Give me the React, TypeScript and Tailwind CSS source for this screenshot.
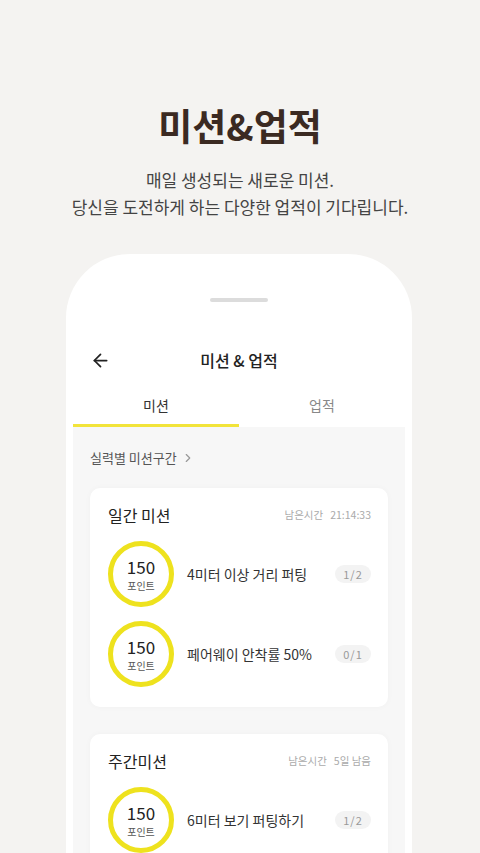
import { ArrowLeft, ChevronRight } from "lucide-react";

const font = { fontFamily: '"Noto Sans CJK KR", "Noto Sans", sans-serif' };

type Mission = { title: string; progress: string };

function MissionRow({ m }: { m: Mission }) {
  return (
    <div className="flex items-center">
      <div className="w-[66px] h-[66px] rounded-full border-[5px] border-[#eee21e] flex flex-col items-center justify-center shrink-0">
        <span className="text-[17px] leading-[20px] text-[#222]">150</span>
        <span className="mt-[2px] text-[10px] leading-[13px] text-[#555]">포인트</span>
      </div>
      <span className="ml-[13px] flex-1 text-[14px] text-[#333]">{m.title}</span>
      <span className="w-[36px] h-[18px] rounded-full bg-[#f3f3f3] text-[11px] leading-[18px] text-center text-[#999] tracking-[1px]">
        {m.progress}
      </span>
    </div>
  );
}

function MissionCard({ title, remain, missions }: { title: string; remain: string; missions: Mission[] }) {
  return (
    <div className="bg-white rounded-[10px] shadow-[0_0_6px_rgba(0,0,0,0.03)] pt-[15px] pb-[20px] pl-[18px] pr-[17px]">
      <div className="flex items-center justify-between h-[24px]">
        <span className="text-[16px] text-[#222]">{title}</span>
        <span className="text-[10.5px] text-[#aaa] flex gap-[7px]">
          <span>남은시간</span>
          <span>{remain}</span>
        </span>
      </div>
      <div className="mt-[14px] flex flex-col gap-[14px]">
        {missions.map((m) => (
          <MissionRow key={m.title} m={m} />
        ))}
      </div>
    </div>
  );
}

export default function App() {
  return (
    <div className="w-[480px] h-[853px] overflow-hidden bg-[#f4f3f1]" style={font}>
      {/* 상단 소개 */}
      <div className="pt-[101px] text-center">
        <h1 className="text-[37px] leading-[48px] font-bold text-[#3b2a22]">미션&업적</h1>
        <p className="mt-[17px] text-[17px] leading-[27px] text-[#444]">
          매일 생성되는 새로운 미션.
          <br />
          당신을 도전하게 하는 다양한 업적이 기다립니다.
        </p>
      </div>

      {/* 폰 화면 */}
      <div className="mt-[34px] ml-[66px] w-[346px] h-[700px] bg-white rounded-t-[64px] px-[7px]">
        <div className="pt-[44px]">
          <div className="mx-auto w-[58px] h-[4px] rounded bg-[#dcdcdc]" />
        </div>

        <div className="mt-[38px] h-10 flex items-center relative px-[17px]">
          <ArrowLeft size={21} strokeWidth={2} className="text-[#222]" />
          <span className="absolute left-0 right-0 text-center text-[16px] font-medium text-[#222]">미션 & 업적</span>
        </div>

        <div className="mt-[7px] flex">
          <div className="flex-1 h-10 flex items-center justify-center border-b-[3px] border-[#f2e43a] pb-[1px]">
            <span className="text-[14px] text-[#333]">미션</span>
          </div>
          <div className="flex-1 h-10 flex items-center justify-center border-b-[3px] border-transparent pb-[1px]">
            <span className="text-[14px] text-[#888]">업적</span>
          </div>
        </div>

        <div className="bg-[#f7f7f7] px-[17px] pt-[22px] h-[600px]">
          <div className="flex items-center h-[18px] text-[13px] text-[#555]">
            실력별 미션구간
            <ChevronRight size={14} className="ml-[4px] text-[#999]" />
          </div>

          <div className="mt-[21px]">
            <MissionCard
              title="일간 미션"
              remain="21:14:33"
              missions={[
                { title: "4미터 이상 거리 퍼팅", progress: "1/2" },
                { title: "페어웨이 안착률 50%", progress: "0/1" },
              ]}
            />
          </div>

          <div className="mt-[27px]">
            <MissionCard
              title="주간미션"
              remain="5일 남음"
              missions={[{ title: "6미터 보기 퍼팅하기", progress: "1/2" }]}
            />
          </div>
        </div>
      </div>
    </div>
  );
}
